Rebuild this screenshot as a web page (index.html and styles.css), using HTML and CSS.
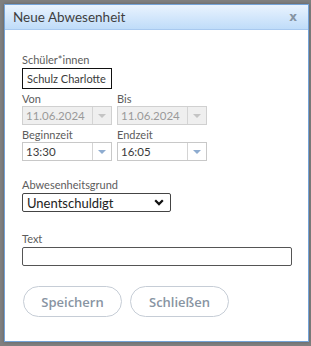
FILE: index.html
```html
<!DOCTYPE html>
<html lang="de">
<head>
<meta charset="utf-8">
<title>Neue Abwesenheit</title>
<link rel="stylesheet" href="styles.css">
</head>
<body>
<div class="dialog">
  <div class="header">
    <span class="title">Neue Abwesenheit</span>
    <span class="close">x</span>
  </div>
  <div class="content">
    <div class="field">
      <label class="label">Schüler*innen</label>
      <div class="student">Schulz Charlotte</div>
    </div>
    <div class="row">
      <div class="field">
        <label class="label">Von</label>
        <div class="combo disabled"><span class="val">11.06.2024</span><span class="btn"><span class="tri"></span></span></div>
      </div>
      <div class="field">
        <label class="label">Bis</label>
        <div class="combo disabled"><span class="val">11.06.2024</span><span class="btn"><span class="tri"></span></span></div>
      </div>
    </div>
    <div class="row">
      <div class="field">
        <label class="label">Beginnzeit</label>
        <div class="combo"><span class="val">13:30</span><span class="btn"><span class="tri"></span></span></div>
      </div>
      <div class="field">
        <label class="label">Endzeit</label>
        <div class="combo"><span class="val">16:05</span><span class="btn"><span class="tri"></span></span></div>
      </div>
    </div>
    <div class="field reason">
      <label class="label">Abwesenheitsgrund</label>
      <div class="select"><span>Unentschuldigt</span>
        <svg class="chev" width="10" height="7" viewBox="0 0 10 7"><path d="M1.2 1.3 L5 5.1 L8.8 1.3" fill="none" stroke="#111" stroke-width="2.2"/></svg>
      </div>
    </div>
    <div class="field text">
      <label class="label">Text</label>
      <div class="textbox"></div>
    </div>
    <div class="buttons">
      <button class="pill">Speichern</button>
      <button class="pill">Schließen</button>
    </div>
  </div>
</div>
</body>
</html>
```

FILE: styles.css
```css
html, body {
  margin: 0;
  padding: 0;
}
body {
  background: #7f7f7f;
  padding: 4px 0 0 4px;
  height: 346px;
  box-sizing: border-box;
  font-family: Lato, "Open Sans", sans-serif;
}
.dialog {
  width: 305px;
  height: 338px;
  box-sizing: border-box;
  border: 1px solid #74a3d8;
  background: #fff;
  box-shadow: 0 0 3px rgba(0,0,0,0.25);
  display: flex;
  flex-direction: column;
}
.header {
  height: 25px;
  box-sizing: border-box;
  background: linear-gradient(#e9f3fe, #bfdcf9);
  border-bottom: 1px solid #a8c9ef;
  display: flex;
  align-items: center;
  justify-content: space-between;
  padding: 0 11px 0 8px;
}
.title {
  font-size: 13.5px;
  color: #3f3f3f;
}
.close {
  font-size: 12px;
  font-weight: bold;
  color: #8593a2;
  font-family: "DejaVu Sans", sans-serif;
}
.content {
  padding: 23px 0 0 17px;
  display: flex;
  flex-direction: column;
}
.field {
  display: flex;
  flex-direction: column;
}
.label {
  font-size: 11px;
  line-height: 14px;
  color: #5c5c5c;
}
.student {
  width: 90px;
  height: 21px;
  box-sizing: border-box;
  border: 1px solid #111;
  margin-top: 1px;
  font-size: 11px;
  line-height: 19px;
  padding-left: 4px;
  color: #3a3a3a;
  white-space: nowrap;
}
.row {
  display: flex;
  gap: 5px;
  margin-top: 3px;
}
.row + .row {
  margin-top: 3px;
}
.combo {
  width: 90px;
  height: 19px;
  box-sizing: border-box;
  border: 1px solid #c8c8c8;
  display: flex;
  background: #fff;
}
.combo .val {
  flex: 1;
  font-size: 11.5px;
  line-height: 17px;
  padding-left: 3px;
  color: #3a3a3a;
}
.combo .btn {
  width: 18px;
  border-left: 1px solid #d4d4d4;
  display: flex;
  align-items: center;
  justify-content: center;
}
.tri {
  width: 0;
  height: 0;
  border-left: 4px solid transparent;
  border-right: 4px solid transparent;
  border-top: 4px solid #8eacd0;
}
.combo.disabled {
  background: #efefef;
  border-color: #d0d0d0;
}
.combo.disabled .val {
  color: #9a9a9a;
}
.combo.disabled .tri {
  border-top-color: #c4c4c4;
}
.reason {
  margin-top: 17px;
}
.select {
  width: 149px;
  height: 19px;
  box-sizing: border-box;
  border: 1px solid #444;
  border-radius: 2px;
  margin-top: 1px;
  display: flex;
  align-items: center;
  justify-content: space-between;
  padding: 0 6px 0 4px;
  font-size: 13px;
  color: #222;
}
.text {
  margin-top: 20px;
}
.textbox {
  width: 270px;
  height: 19px;
  box-sizing: border-box;
  border: 1px solid #555;
  border-radius: 2px;
  margin-top: 1px;
}
.buttons {
  display: flex;
  gap: 8px;
  margin-top: 20px;
  padding-left: 1px;
}
.pill {
  width: 99px;
  height: 31px;
  box-sizing: border-box;
  border: 1px solid #c6cdd6;
  border-radius: 16px;
  background: #fff;
  font-family: "Open Sans", sans-serif;
  font-size: 13px;
  font-weight: 600;
  color: #8894a2;
  padding: 0;
}
```
